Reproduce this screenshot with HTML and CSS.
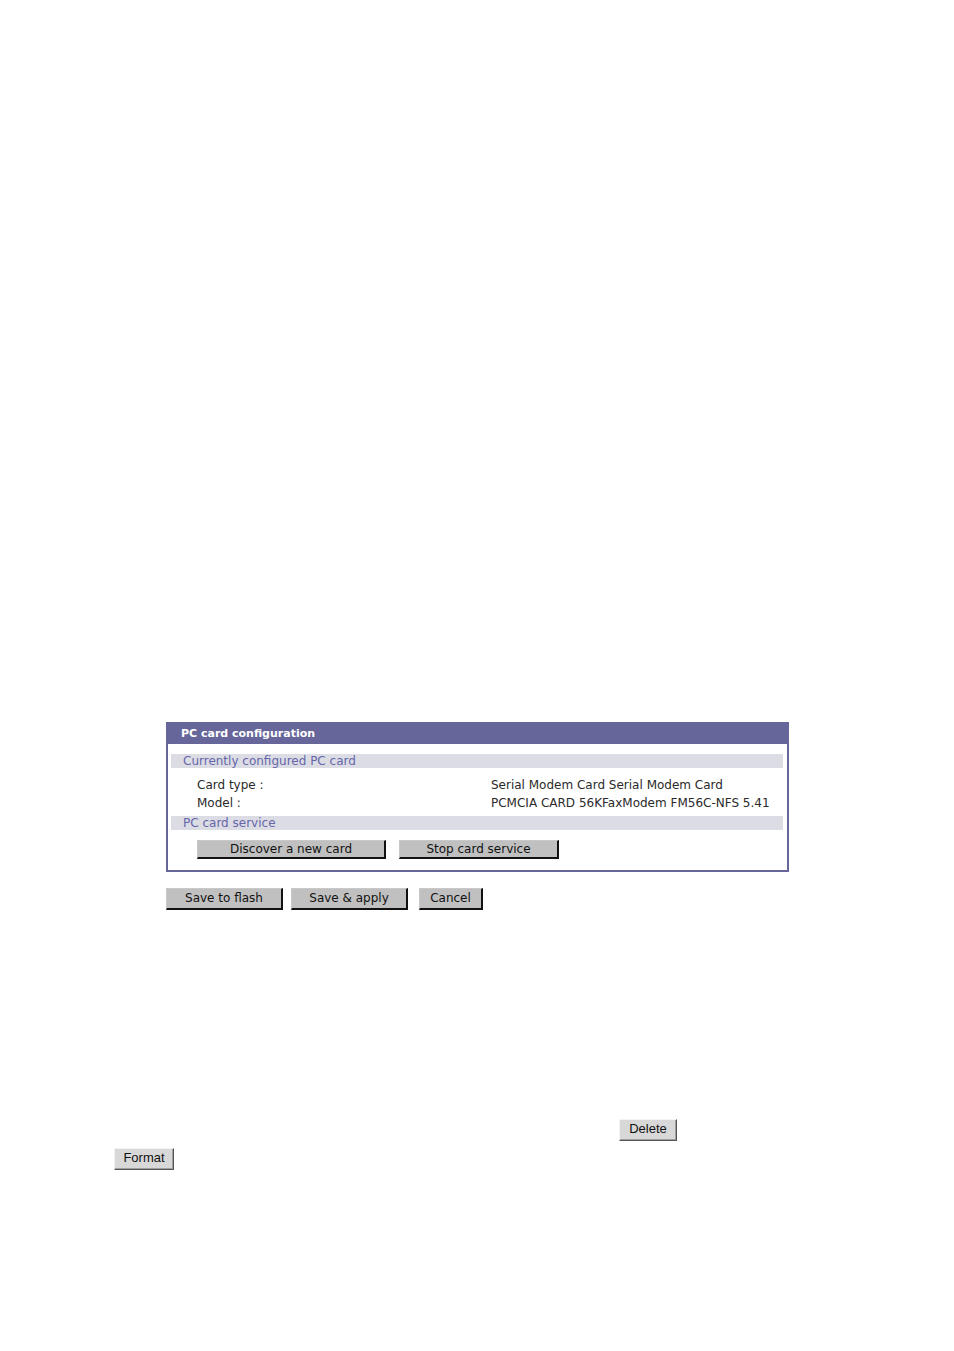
FILE: index.html
```html
<!DOCTYPE html>
<html>
<head>
<meta charset="utf-8">
<title>PC card configuration</title>
<link rel="stylesheet" href="styles.css">
</head>
<body>
<div class="page">
  <div class="panel">
    <div class="panel-title">PC card configuration</div>
    <div class="section">Currently configured PC card</div>
    <div class="rows">
      <div class="row"><span class="label">Card type :</span><span class="value">Serial Modem Card Serial Modem Card</span></div>
      <div class="row"><span class="label">Model :</span><span class="value">PCMCIA CARD 56KFaxModem FM56C-NFS 5.41</span></div>
    </div>
    <div class="section">PC card service</div>
    <div class="actions">
      <button class="btn btn-discover">Discover a new card</button>
      <button class="btn btn-stop">Stop card service</button>
    </div>
  </div>
  <div class="footer-actions">
    <button class="btn btn-big btn-flash">Save to flash</button>
    <button class="btn btn-big btn-apply">Save &amp; apply</button>
    <button class="btn btn-big btn-cancel">Cancel</button>
  </div>
  <div class="win-row win-delete"><button class="win-btn btn-del">Delete</button></div>
  <div class="win-row win-format"><button class="win-btn btn-fmt">Format</button></div>
</div>
</body>
</html>
```
FILE: styles.css
```css
html, body {
  margin: 0;
  padding: 0;
  background: #ffffff;
}
.page {
  width: 954px;
  height: 1351px;
  padding-top: 722px;
  box-sizing: border-box;
  font-family: "DejaVu Sans", Verdana, sans-serif;
  font-size: 12px;
  color: #2a2a2a;
}
.panel {
  margin-left: 166px;
  width: 623px;
  height: 150px;
  box-sizing: border-box;
  border: 2px solid #66669a;
  border-top: 0;
  background: #ffffff;
}
.panel-title {
  height: 22px;
  line-height: 23px;
  background: #66669a;
  color: #ffffff;
  font-weight: bold;
  font-size: 11px;
  margin: 0 -2px 10px -2px;
  padding-left: 15px;
}
.section {
  height: 14px;
  line-height: 15px;
  margin: 0 4px 0 3px;
  background: #dcdce4;
  color: #6666aa;
  padding-left: 12px;
}
.rows {
  padding: 8px 0 4px 0;
}
.row {
  display: flex;
  height: 18px;
  line-height: 19px;
}
.label {
  width: 294px;
  padding-left: 29px;
}
.value {
  color: #2a2a2a;
}
.actions {
  display: flex;
  gap: 13px;
  padding: 10px 0 0 29px;
}
.btn {
  font-family: "DejaVu Sans", Verdana, sans-serif;
  font-size: 12px;
  color: #111111;
  background: #c0c0c0;
  border: 0;
  border-top: 1px solid #c8c8c8;
  border-left: 1px solid #c8c8c8;
  border-right: 2px solid #111111;
  border-bottom: 2px solid #111111;
  height: 19px;
  padding: 0;
  margin: 0;
  line-height: 15px;
}
.btn-discover { width: 189px; }
.btn-stop { width: 160px; }
.footer-actions {
  display: flex;
  margin: 16px 0 0 166px;
  gap: 8px;
}
.btn-big {
  height: 22px;
  font-size: 12px;
  line-height: 17px;
}
.btn-flash { width: 117px; }
.btn-apply { width: 117px; }
.btn-cancel { width: 64px; margin-left: 3px; }
.win-row {
  display: flex;
}
.win-delete {
  margin: 209px 0 0 619px;
}
.win-format {
  margin: 7px 0 0 114px;
}
.win-btn {
  font-family: "Liberation Sans", Arial, sans-serif;
  font-size: 13px;
  color: #111111;
  background: #d8d8d8;
  border: 1px solid;
  border-color: #f4f4f4 #555555 #555555 #f4f4f4;
  box-shadow: inset -1px -1px 0 #a0a0a0;
  height: 22px;
  padding: 0 0 3px 0;
  margin: 0;
}
.btn-del { width: 58px; }
.btn-fmt { width: 60px; }
```
